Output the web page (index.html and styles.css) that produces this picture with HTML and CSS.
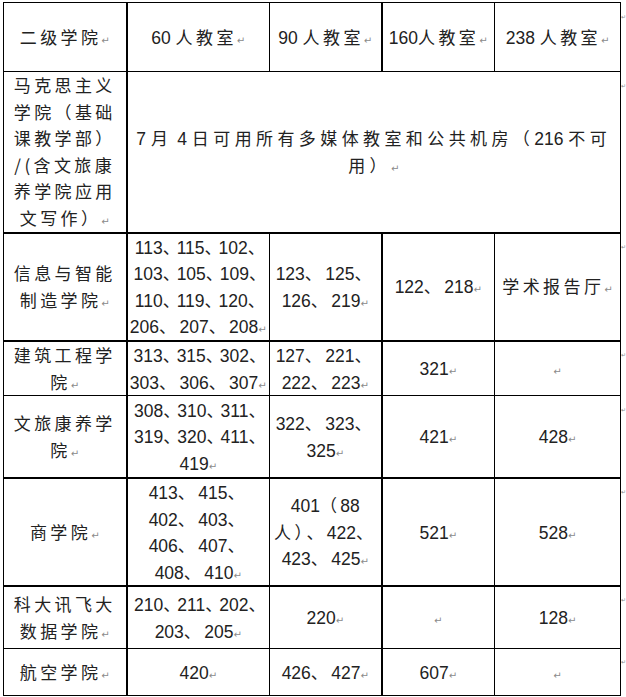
FILE: index.html
```html
<!DOCTYPE html>
<html lang="zh-CN">
<head>
<meta charset="utf-8">
<title>二级学院教室安排</title>
<link rel="stylesheet" href="styles.css">
</head>
<body>
<table class="grid">
  <colgroup>
    <col class="w1"><col class="w2"><col class="w3"><col class="w4"><col class="w5"><col class="w6">
  </colgroup>
  <tr class="r-head">
    <td class="c1">二级学院<span class="pm">↵</span></td>
    <td class="c2"><span class="n">60 </span>人教室<span class="pm">↵</span></td>
    <td class="c3"><span class="n">90 </span>人教室<span class="pm">↵</span></td>
    <td class="c4"><span class="n">160</span>人教室<span class="pm">↵</span></td>
    <td class="c5"><span class="n">238 </span>人教室<span class="pm">↵</span></td>
    <td class="eor"><span class="em">↵</span></td>
  </tr>
  <tr class="r-marx thick">
    <td class="c1">马克思主义<br>学院（基础<br>课教学部）<br>/(含文旅康<br>养学院应用<br>文写作）<span class="pm">↵</span></td>
    <td class="c2 spread" colspan="4"><span class="n">7 </span>月<span class="n"> 4 </span>日可用所有多媒体教室和公共机房（<span class="n">216 </span>不可<br>用）<span class="pm">↵</span></td>
    <td class="eor"><span class="em">↵</span></td>
  </tr>
  <tr class="r-info thick">
    <td class="c1">信息与智能<br>制造学院<span class="pm">↵</span></td>
    <td class="c2"><span class="t"><span class="n">113</span>、<span class="n">115</span>、<span class="n">102</span>、</span><br><span class="t"><span class="n">103</span>、<span class="n">105</span>、<span class="n">109</span>、</span><br><span class="t"><span class="n">110</span>、<span class="n">119</span>、<span class="n">120</span>、</span><br><span class="n">206</span>、<span class="n">207</span>、<span class="n">208</span><span class="pm">↵</span></td>
    <td class="c3"><span class="n">123</span>、<span class="n">125</span>、<br><span class="n">126</span>、<span class="n">219</span><span class="pm">↵</span></td>
    <td class="c4"><span class="n">122</span>、<span class="n">218</span><span class="pm">↵</span></td>
    <td class="c5">学术报告厅<span class="pm">↵</span></td>
    <td class="eor"><span class="em">↵</span></td>
  </tr>
  <tr class="r-jz">
    <td class="c1">建筑工程学<br>院<span class="pm">↵</span></td>
    <td class="c2"><span class="t"><span class="n">313</span>、<span class="n">315</span>、<span class="n">302</span>、</span><br><span class="n">303</span>、<span class="n">306</span>、<span class="n">307</span><span class="pm">↵</span></td>
    <td class="c3"><span class="n">127</span>、<span class="n">221</span>、<br><span class="n">222</span>、<span class="n">223</span><span class="pm">↵</span></td>
    <td class="c4"><span class="n">321</span><span class="pm">↵</span></td>
    <td class="c5"><span class="pm">↵</span></td>
    <td class="eor"><span class="em">↵</span></td>
  </tr>
  <tr class="r-wl thick">
    <td class="c1">文旅康养学<br>院<span class="pm">↵</span></td>
    <td class="c2"><span class="t"><span class="n">308</span>、<span class="n">310</span>、<span class="n">311</span>、</span><br><span class="t"><span class="n">319</span>、<span class="n">320</span>、<span class="n">411</span>、</span><br><span class="n">419</span><span class="pm">↵</span></td>
    <td class="c3"><span class="n">322</span>、<span class="n">323</span>、<br><span class="n">325</span><span class="pm">↵</span></td>
    <td class="c4"><span class="n">421</span><span class="pm">↵</span></td>
    <td class="c5"><span class="n">428</span><span class="pm">↵</span></td>
    <td class="eor"><span class="em">↵</span></td>
  </tr>
  <tr class="r-sx thick">
    <td class="c1">商学院<span class="pm">↵</span></td>
    <td class="c2"><span class="n">413</span>、<span class="n">415</span>、<br><span class="n">402</span>、<span class="n">403</span>、<br><span class="n">406</span>、<span class="n">407</span>、<br><span class="n">408</span>、<span class="n">410</span><span class="pm">↵</span></td>
    <td class="c3"><span class="n">401</span>（<span class="n">88</span><br>人）、<span class="n">422</span>、<br><span class="n">423</span>、<span class="n">425</span><span class="pm">↵</span></td>
    <td class="c4"><span class="n">521</span><span class="pm">↵</span></td>
    <td class="c5"><span class="n">528</span><span class="pm">↵</span></td>
    <td class="eor"><span class="em">↵</span></td>
  </tr>
  <tr class="r-kd">
    <td class="c1">科大讯飞大<br>数据学院<span class="pm">↵</span></td>
    <td class="c2"><span class="t"><span class="n">210</span>、<span class="n">211</span>、<span class="n">202</span>、</span><br><span class="n">203</span>、<span class="n">205</span><span class="pm">↵</span></td>
    <td class="c3"><span class="n">220</span><span class="pm">↵</span></td>
    <td class="c4"><span class="pm">↵</span></td>
    <td class="c5"><span class="n">128</span><span class="pm">↵</span></td>
    <td class="eor"><span class="em">↵</span></td>
  </tr>
  <tr class="r-hk">
    <td class="c1">航空学院<span class="pm">↵</span></td>
    <td class="c2"><span class="n">420</span><span class="pm">↵</span></td>
    <td class="c3"><span class="n">426</span>、<span class="n">427</span><span class="pm">↵</span></td>
    <td class="c4"><span class="n">607</span><span class="pm">↵</span></td>
    <td class="c5"><span class="pm">↵</span></td>
    <td class="eor"><span class="em">↵</span></td>
  </tr>
</table>
<div class="page-edge"></div>
</body>
</html>
```

FILE: styles.css
```css
html, body {
  margin: 0;
  padding: 0;
  background: #fff;
  overflow: hidden;
}

body {
  font-family: "Noto Sans CJK SC", "Noto Sans", sans-serif;
  font-size: 17px;
  letter-spacing: 3.4px;
  color: #222;
}

.grid {
  border-collapse: collapse;
  table-layout: fixed;
  width: 622px;
  margin: 2px 0 0 3px;
}

.w1 { width: 123px; }
.w2 { width: 143px; }
.w3 { width: 112px; }
.w4 { width: 113px; }
.w5 { width: 126px; }
.w6 { width: 5px; }

.grid td {
  border: 1px solid #000;
  padding: 0;
  text-align: center;
  vertical-align: middle;
  line-height: 26.6px;
  white-space: nowrap;
}

.grid td.c1,
.grid td.c3 {
  border-right-width: 2px;
}

.grid tr.thick td {
  border-bottom-width: 2px;
}

.grid td.eor {
  border: none;
  vertical-align: top;
  text-align: left;
  line-height: 10px;
  padding-top: 4px;
}

.r-head { height: 69px; }
.r-marx { height: 161px; }
.r-info { height: 108px; }
.r-jz { height: 55px; }
.r-wl { height: 82px; }
.r-sx { height: 108px; }
.r-kd { height: 62px; }
.r-hk { height: 47px; }

.n {
  font-family: "Liberation Sans", Arial, sans-serif;
  font-size: 17.5px;
  line-height: 1;
  letter-spacing: 0;
}

.spread {
  letter-spacing: 4.4px;
}

.t {
  letter-spacing: -3px;
}

.t .n {
  letter-spacing: 0;
}

.pm {
  font-family: "DejaVu Sans", sans-serif;
  font-size: 10px;
  line-height: 1;
  letter-spacing: 0;
  color: #8a8a8a;
}

.em {
  font-family: "DejaVu Sans", sans-serif;
  font-size: 6px;
  line-height: 1;
  letter-spacing: 0;
  color: #8a8a8a;
}

.page-edge {
  border-top: 1px dashed #c4c4c4;
  margin-top: 1px;
}
```
